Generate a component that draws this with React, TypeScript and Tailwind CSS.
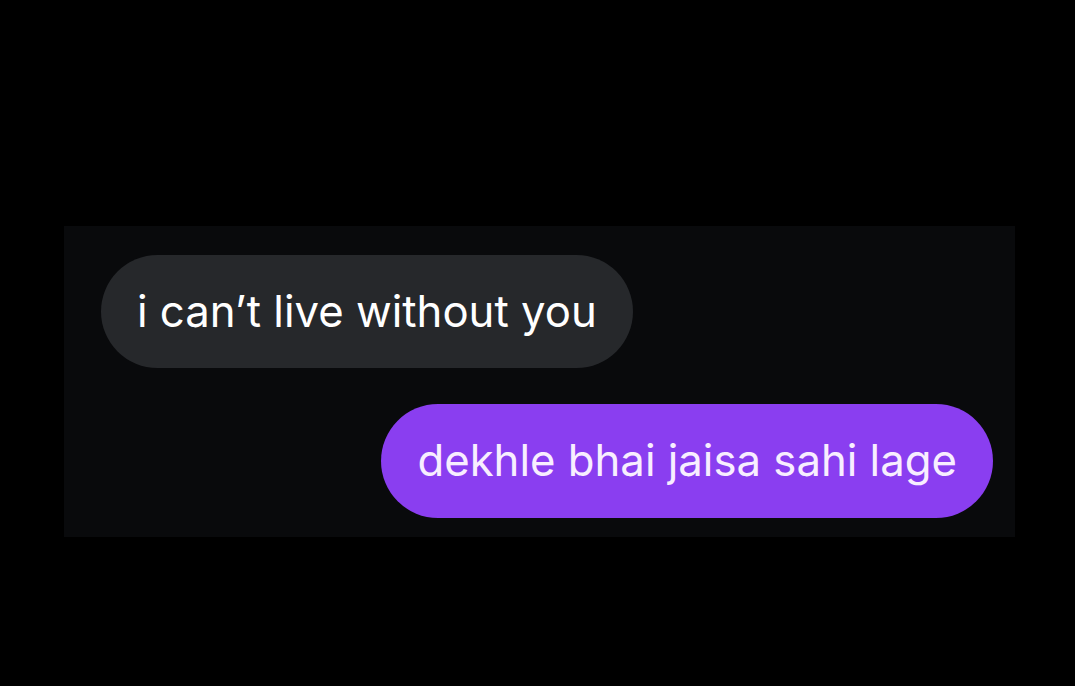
export default function App() {
  return (
    <div
      className="min-h-screen w-full bg-black pt-[226px] pl-[64px] pr-[60px]"
      style={{ fontFamily: 'Inter, "Noto Sans", sans-serif' }}
    >
      <div className="flex h-[311px] flex-col bg-[#090a0c] pt-[29px] pl-[37px] pr-[22px]">
        {/* incoming */}
        <div className="flex">
          <div className="flex h-[113px] items-center rounded-full bg-[#26282b] px-9 text-[43.7px] text-white">
            i can’t live without you
          </div>
        </div>

        {/* outgoing */}
        <div className="mt-[36px] flex justify-end">
          <div className="flex h-[114px] items-center rounded-full bg-[#8a3ef0] px-9 text-[43.7px] text-[#f8eeff]">
            dekhle bhai jaisa sahi lage
          </div>
        </div>
      </div>
    </div>
  );
}
